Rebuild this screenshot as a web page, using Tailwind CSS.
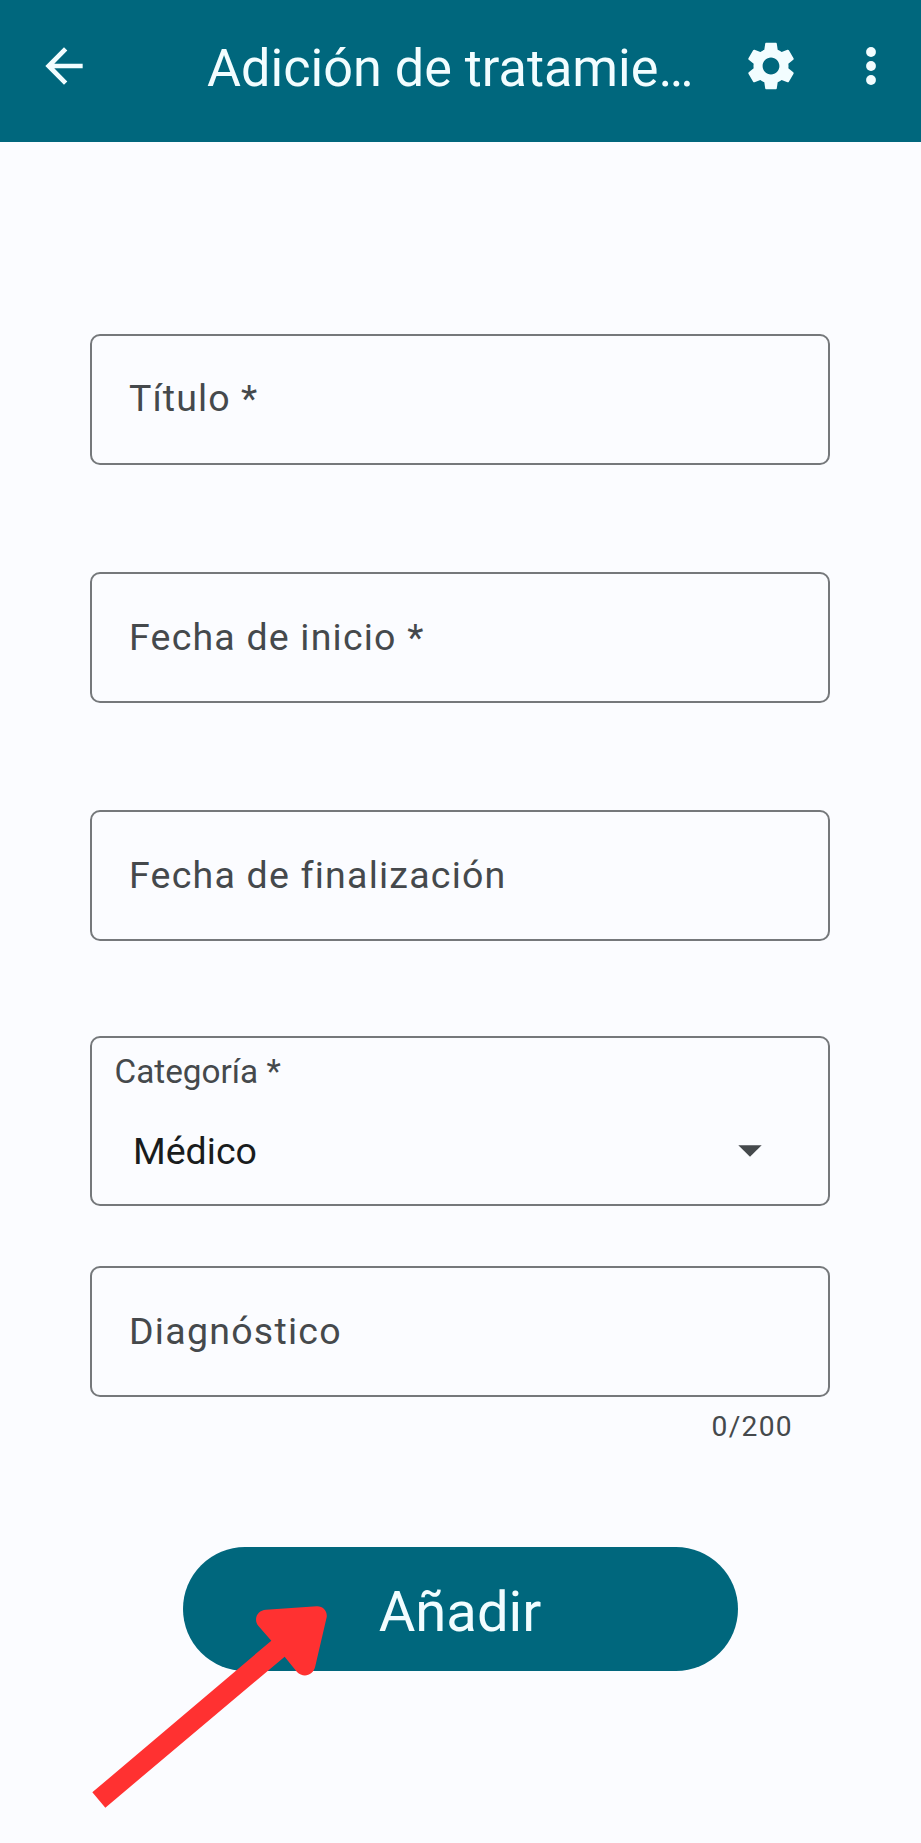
<!DOCTYPE html>
<html lang="es">
<head>
<meta charset="utf-8">
<title>Adición de tratamiento</title>
<script src="https://cdn.jsdelivr.net/npm/@tailwindcss/browser@4"></script>
</head>
<body class="bg-[#fbfcff]">
<div class="relative flex h-[1843px] w-[921px] flex-col overflow-hidden bg-[#fbfcff] font-[Roboto,sans-serif] text-[#45494c]">
  <header class="flex h-[142px] shrink-0 items-start bg-[#00677d] pt-[38px] pl-9 text-[#f2fdff]">
    <svg class="size-14 shrink-0" viewBox="0 0 24 24" fill="currentColor"><path d="M20 11H7.83l5.59-5.59L12 4l-8 8 8 8 1.41-1.41L7.83 13H20v-2z"/></svg>
    <h1 class="ml-[115px] w-[499px] whitespace-nowrap text-[52.2px] leading-[62px]">Adición de tratamie…</h1>
    <svg class="ml-[37px] size-14 shrink-0" viewBox="0 0 24 24" fill="currentColor"><path d="M19.43 12.98c.04-.32.07-.64.07-.98s-.03-.66-.07-.98l2.11-1.65c.19-.15.24-.42.12-.64l-2-3.46c-.12-.22-.39-.3-.61-.22l-2.49 1c-.52-.4-1.08-.73-1.69-.98l-.38-2.65C14.46 2.18 14.25 2 14 2h-4c-.25 0-.46.18-.49.42l-.38 2.65c-.61.25-1.17.59-1.69.98l-2.49-1c-.23-.09-.49 0-.61.22l-2 3.46c-.13.22-.07.49.12.64l2.11 1.65c-.04.32-.07.65-.07.98s.03.66.07.98l-2.11 1.65c-.19.15-.24.42-.12.64l2 3.46c.12.22.39.3.61.22l2.49-1c.52.4 1.08.73 1.69.98l.38 2.65c.03.24.24.42.49.42h4c.25 0 .46-.18.49-.42l.38-2.65c.61-.25 1.17-.59 1.69-.98l2.49 1c.23.09.49 0 .61-.22l2-3.46c.12-.22.07-.49-.12-.64l-2.11-1.65zM12 15.6c-1.98 0-3.6-1.62-3.6-3.6s1.62-3.6 3.6-3.6 3.6 1.62 3.6 3.6-1.62 3.6-3.6 3.6z"/></svg>
    <svg class="ml-[44px] size-14 shrink-0" viewBox="0 0 24 24" fill="currentColor"><circle cx="12" cy="6" r="2.1"/><circle cx="12" cy="12" r="2.1"/><circle cx="12" cy="18" r="2.1"/></svg>
  </header>
  <main class="flex flex-col pr-[91px] pl-[90px]">
    <div class="mt-[192px] flex h-[131px] items-center rounded-[10px] border-[2.5px] border-[#75787b] pb-0.5 pl-[37px] text-[37.5px] tracking-[1.1px]">Título *</div>
    <div class="mt-[107px] flex h-[131px] items-center rounded-[10px] border-[2.5px] border-[#75787b] pl-[37px] text-[37.5px] tracking-[1.2px]">Fecha de inicio *</div>
    <div class="mt-[107px] flex h-[131px] items-center rounded-[10px] border-[2.5px] border-[#75787b] pl-[37px] text-[37.5px] tracking-[1.22px]">Fecha de finalización</div>
    <div class="mt-[95px] flex h-[170px] flex-col rounded-[10px] border-[2.5px] border-[#75787b]">
      <div class="mt-[14px] pl-[22.5px] text-[33.3px] leading-[40px]">Categoría *</div>
      <div class="mt-[31px] flex items-center justify-between pr-[50px] pl-[41px] text-[37.5px] leading-[48px] text-[#191c1d]">
        <span>Médico</span>
        <svg class="size-14 text-[#45494c]" viewBox="0 0 24 24" fill="currentColor"><path d="M7 9.5l5 5 5-5z"/></svg>
      </div>
    </div>
    <div class="mt-[60px] flex h-[131px] items-center rounded-[10px] border-[2.5px] border-[#75787b] pl-[37px] text-[37.5px] tracking-[1.25px]">Diagnóstico</div>
    <div class="mt-[13px] h-[34px] pr-[37px] text-right text-[28.2px] leading-[34px] tracking-[1.3px]">0/200</div>
    <button class="mt-[103.4px] h-[123.4px] w-[555px] self-center rounded-full bg-[#00677d] pt-1.5 text-[56.2px] leading-[66px] text-[#f2fdff]">Añadir</button>
  </main>
  <svg class="absolute top-[1530px] left-[80px] size-[300px]" viewBox="0 0 900 900" fill="#ff3131"><path d="M37 787L574 332L536 289C518 267 533 240 558 239L710 229C729 228 743 244 740 262L706 408C700 438 669 444 651 426L614 380L76 833Z"/></svg>
</div>
</body>
</html>
